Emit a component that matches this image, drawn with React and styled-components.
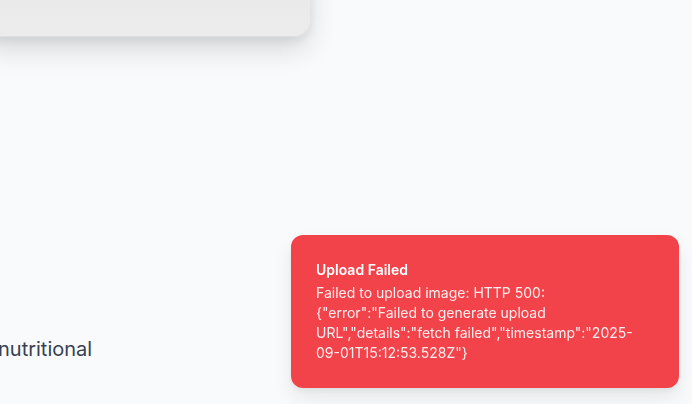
import React from "react";
import styled, { createGlobalStyle } from "styled-components";

const GlobalStyle = createGlobalStyle`
  html, body {
    margin: 0;
    padding: 0;
    background: #f9fafb;
    font-family: Inter, "Noto Sans", sans-serif;
    overflow: hidden;
  }
`;

const Page = styled.div`
  width: 692px;
  height: 404px;
  display: flex;
  flex-direction: column;
  overflow: hidden;
`;

const Card = styled.div`
  width: 330px;
  height: 80px;
  margin-top: -44px;
  margin-left: -20px;
  border-radius: 16px;
  background: linear-gradient(180deg, #e8e8e8 0%, #ececec 100%);
  border-bottom: 1px solid #dedede;
  box-shadow: 0 12px 28px rgba(0, 0, 0, 0.14), 0 4px 8px rgba(0, 0, 0, 0.06);
`;

const Blurb = styled.p`
  margin: 298px 0 0 -2px;
  font-size: 20px;
  line-height: 28px;
  color: #374151;
  white-space: nowrap;
`;

const Toast = styled.div`
  position: fixed;
  right: 13px;
  bottom: 16px;
  width: 388px;
  box-sizing: border-box;
  padding: 25px;
  border-radius: 12px;
  background: #f2434a;
  color: #fff;
  box-shadow: 0 10px 20px rgba(0, 0, 0, 0.08), 0 3px 6px rgba(0, 0, 0, 0.05);
`;

const ToastTitle = styled.div`
  font-size: 14px;
  line-height: 20px;
  font-weight: 600;
  margin-bottom: 3px;
`;

const ToastBody = styled.div`
  font-size: 14px;
  line-height: 20px;
  opacity: 0.9;
  max-width: 330px;
`;

export default function App() {
  return (
    <Page>
      <GlobalStyle />
      <Card />
      <Blurb>nutritional</Blurb>
      <Toast>
        <ToastTitle>Upload Failed</ToastTitle>
        <ToastBody>
          Failed to upload image: HTTP 500:
          {' {"error":"Failed to generate upload URL","details":"fetch failed","timestamp":"2025-09-01T15:12:53.528Z"}'}
        </ToastBody>
      </Toast>
    </Page>
  );
}
